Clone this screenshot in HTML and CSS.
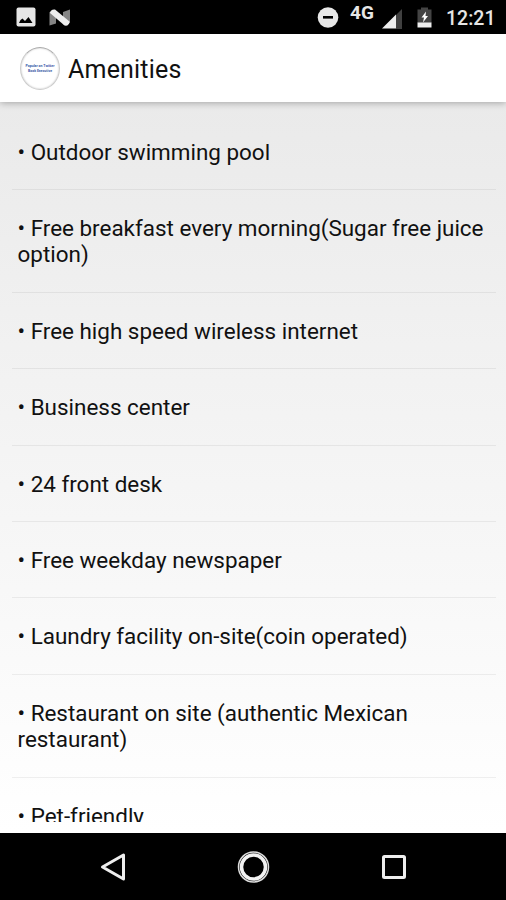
FILE: index.html
```html
<!DOCTYPE html>
<html lang="en">
<head>
    <meta charset="UTF-8">
    <meta name="viewport" content="width=device-width, initial-scale=1.0">
    <title>Amenities</title>
    <link rel="stylesheet" href="styles.css">
</head>
<body>
    <div class="phone">
        <div class="statusbar">
            <svg class="pic" width="20" height="20" viewBox="0 0 20 20">
                <rect x="0.5" y="0.5" width="19" height="19" rx="2" fill="#e6e6e6"/>
                <path d="M3 16 L4.500 13 L6.500 11.500 L9 14 L12.500 10 L16.500 16 Z" fill="#000"/>
            </svg>
            <svg class="nougat" width="22" height="18" viewBox="0 0 22 18">
                <path d="M0.500 3 H7 V14.500 L0.500 16.500 Z M14 3 L21 0.500 V14 L14 15.500 Z" fill="#858585"/>
                <path d="M1 4 Q1.500 0 6 0.500 L20.500 12.500 Q20 17.500 15.500 16.500 Z" fill="#eee"/>
            </svg>
            <svg class="dnd" width="22" height="22" viewBox="0 0 22 22">
                <circle cx="11" cy="10.500" r="10.300" fill="#e8e8e8"/>
                <path d="M6 10.300 H16" stroke="#000" stroke-width="2.600"/>
            </svg>
            <span class="net">4G</span>
            <svg class="signal" width="20" height="20" viewBox="0 0 20 20">
                <path d="M14 6 L20 0 V20 H14 Z" fill="#404040"/>
                <path d="M0 19.500 L14 5.500 V19.500 Z" fill="#eee"/>
            </svg>
            <svg class="battery" width="15" height="21" viewBox="0 0 15 21">
                <path d="M0.500 2.500 H4 V0.500 H11 V2.500 H14.500 V16 H0.500 Z" fill="#444"/>
                <path d="M0.500 15.500 H14.500 V20.500 H0.500 Z" fill="#eee"/>
                <path d="M9 4.500 L4.500 10.500 H7 L6 15.500 L11 9 H8.500 Z" fill="#fff"/>
            </svg>
            <span class="time">12:21</span>
        </div>
        <div class="header">
            <div class="logo">
                <span>Popular on Twitter</span>
                <span>Book Executive</span>
            </div>
            <h1>Amenities</h1>
        </div>
        <div class="content">
            <ul class="list">
                <li>• Outdoor swimming pool</li>
                <li>• Free breakfast every morning(Sugar free juice option)</li>
                <li>• Free high speed wireless internet</li>
                <li>• Business center</li>
                <li>• 24 front desk</li>
                <li>• Free weekday newspaper</li>
                <li>• Laundry facility on-site(coin operated)</li>
                <li>• Restaurant on site (authentic Mexican restaurant)</li>
                <li>• Pet-friendly</li>
            </ul>
        </div>
        <div class="navbar">
            <svg width="26" height="30" viewBox="0 0 26 30">
                <path d="M23.500 3 V27 L2.500 15 Z" fill="none" stroke="#eee" stroke-width="3" stroke-linejoin="round"/>
            </svg>
            <svg width="34" height="34" viewBox="0 0 34 34">
                <circle cx="16.500" cy="17" r="15" fill="none" stroke="#ddd" stroke-width="1.500"/>
                <circle cx="16.500" cy="17" r="12" fill="none" stroke="#f2f2f2" stroke-width="3.500"/>
            </svg>
            <svg width="26" height="26" viewBox="0 0 26 26">
                <rect x="2.500" y="2.500" width="21" height="21" rx="1" fill="none" stroke="#eee" stroke-width="3"/>
            </svg>
        </div>
    </div>
</body>
</html>
```
FILE: styles.css
```css
*{
    margin: 0;
    padding: 0;
    list-style: none;
    box-sizing: border-box;
}
body{
    font-family: Roboto, "Liberation Sans", sans-serif;
    color: #111;
}
.phone{
    width: 506px;
    height: 900px;
    display: flex;
    flex-direction: column;
    overflow: hidden;
    background: #000;
}
.statusbar{
    height: 34px;
    flex: none;
    display: flex;
    align-items: flex-start;
    padding: 7px 12px 0 16px;
    color: #e6e6e6;
    background: #000;
}
.statusbar .nougat{
    margin: 2px 0 0 13px;
}
.statusbar .dnd{
    margin-left: auto;
}
.statusbar .net{
    font-size: 19px;
    font-weight: 700;
    line-height: 18px;
    margin: -3px 0 0 11px;
    width: 26px;
}
.statusbar .signal{
    margin: 2px 0 0 6px;
}
.statusbar .battery{
    margin-left: 15px;
}
.statusbar .time{
    width: 48px;
    font-size: 19.5px;
    font-weight: 500;
    line-height: 24px;
    margin: 0 0 0 14px;
    white-space: nowrap;
}
.header{
    height: 68px;
    flex: none;
    display: flex;
    align-items: center;
    padding: 1px 0 0 20px;
    background: #fff;
    position: relative;
    box-shadow: 0 1px 7px rgba(0,0,0,.3);
}
.logo{
    width: 40px;
    height: 43px;
    border-radius: 50%;
    border: 1px solid #ccc;
    border-top-color: #aaa;
    box-shadow: inset 0 0 2px #bbb;
    display: flex;
    flex-direction: column;
    align-items: center;
    justify-content: center;
    color: #3858a8;
    font-size: 3.5px;
    font-weight: 700;
    line-height: 5px;
    white-space: nowrap;
}
.header h1{
    font-size: 25px;
    font-weight: 400;
    margin-left: 8px;
    padding-top: 2px;
    letter-spacing: .2px;
}
.content{
    height: 731px;
    flex: none;
    padding: 11.5px 10px 11px 12px;
    background: linear-gradient(#eaeaea, #fff);
}
.list{
    height: 708.5px;
    overflow: hidden;
}
.list li{
    padding: 25px 5px 24px 5.5px;
    font-size: 22.45px;
    line-height: 26.4px;
    border-bottom: 1px solid rgba(0,0,0,.06);
}
.navbar{
    flex: 1;
    display: flex;
    align-items: center;
    justify-content: space-between;
    padding: 0 99px 0 100px;
}
```
